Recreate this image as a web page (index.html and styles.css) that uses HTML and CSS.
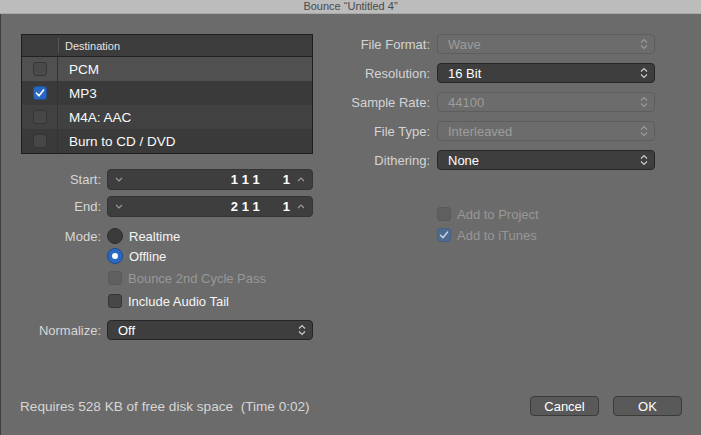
FILE: index.html
```html
<!DOCTYPE html>
<html>
<head>
<meta charset="utf-8">
<link rel="stylesheet" href="styles.css">
</head>
<body>
<div class="window">
  <div class="titlebar"><span class="ttext">Bounce “Untitled 4”</span></div>
  <div class="body">
    <div class="main">
      <div class="left">
        <div class="table">
          <div class="thead"><div class="c1"></div><div class="c2">Destination</div></div>
          <div class="trow r-light"><div class="c1"><span class="cb"></span></div><div class="c2">PCM</div></div>
          <div class="trow r-dark"><div class="c1"><span class="cb on"><svg viewBox="0 0 14 14" width="14" height="14"><path d="M3.5 7.2 L6 9.8 L10.6 4" fill="none" stroke="#fff" stroke-width="1.6" stroke-linecap="round" stroke-linejoin="round"/></svg></span></div><div class="c2">MP3</div></div>
          <div class="trow r-mid"><div class="c1"><span class="cb"></span></div><div class="c2">M4A: AAC</div></div>
          <div class="trow r-dark"><div class="c1"><span class="cb"></span></div><div class="c2">Burn to CD / DVD</div></div>
        </div>

        <div class="frow start">
          <span class="lbl">Start:</span>
          <div class="stepper">
            <svg class="chev" viewBox="0 0 8 5" width="8" height="5"><path d="M1 1 L4 4 L7 1" fill="none" stroke="#9c9c9c" stroke-width="1.1"/></svg>
            <span class="fill"></span>
            <span class="num">1 1 1</span>
            <span class="num num2">1</span>
            <svg class="chev up" viewBox="0 0 8 5" width="8" height="5"><path d="M1 4 L4 1 L7 4" fill="none" stroke="#9c9c9c" stroke-width="1.1"/></svg>
          </div>
        </div>
        <div class="frow end">
          <span class="lbl">End:</span>
          <div class="stepper">
            <svg class="chev" viewBox="0 0 8 5" width="8" height="5"><path d="M1 1 L4 4 L7 1" fill="none" stroke="#9c9c9c" stroke-width="1.1"/></svg>
            <span class="fill"></span>
            <span class="num">2 1 1</span>
            <span class="num num2">1</span>
            <svg class="chev up" viewBox="0 0 8 5" width="8" height="5"><path d="M1 4 L4 1 L7 4" fill="none" stroke="#9c9c9c" stroke-width="1.1"/></svg>
          </div>
        </div>
        <div class="frow mode1">
          <span class="lbl">Mode:</span>
          <span class="radio"></span><span class="opt">Realtime</span>
        </div>
        <div class="frow mode2">
          <span class="lbl"></span>
          <span class="radio sel"><span class="dot"></span></span><span class="opt">Offline</span>
        </div>
        <div class="frow cbrow1">
          <span class="lbl"></span>
          <span class="cb dis"></span><span class="opt dim">Bounce 2nd Cycle Pass</span>
        </div>
        <div class="frow cbrow2">
          <span class="lbl"></span>
          <span class="cb"></span><span class="opt">Include Audio Tail</span>
        </div>
        <div class="frow norm">
          <span class="lbl">Normalize:</span>
          <div class="popup on wide">
            <span class="ptext">Off</span>
            <svg class="updown" viewBox="0 0 8 12" width="8" height="12"><path d="M1 4.5 L4 1.5 L7 4.5 M1 7.5 L4 10.5 L7 7.5" fill="none" stroke="#cfcfcf" stroke-width="1.1"/></svg>
          </div>
        </div>
      </div>

      <div class="right">
        <div class="prow">
          <span class="rlbl">File Format:</span>
          <div class="popup off"><span class="ptext">Wave</span><svg class="updown" viewBox="0 0 8 12" width="8" height="12"><path d="M1 4.5 L4 1.5 L7 4.5 M1 7.5 L4 10.5 L7 7.5" fill="none" stroke="#9a9a9a" stroke-width="1.1"/></svg></div>
        </div>
        <div class="prow">
          <span class="rlbl">Resolution:</span>
          <div class="popup on"><span class="ptext">16 Bit</span><svg class="updown" viewBox="0 0 8 12" width="8" height="12"><path d="M1 4.5 L4 1.5 L7 4.5 M1 7.5 L4 10.5 L7 7.5" fill="none" stroke="#cfcfcf" stroke-width="1.1"/></svg></div>
        </div>
        <div class="prow">
          <span class="rlbl">Sample Rate:</span>
          <div class="popup off"><span class="ptext">44100</span><svg class="updown" viewBox="0 0 8 12" width="8" height="12"><path d="M1 4.5 L4 1.5 L7 4.5 M1 7.5 L4 10.5 L7 7.5" fill="none" stroke="#9a9a9a" stroke-width="1.1"/></svg></div>
        </div>
        <div class="prow">
          <span class="rlbl">File Type:</span>
          <div class="popup off"><span class="ptext">Interleaved</span><svg class="updown" viewBox="0 0 8 12" width="8" height="12"><path d="M1 4.5 L4 1.5 L7 4.5 M1 7.5 L4 10.5 L7 7.5" fill="none" stroke="#9a9a9a" stroke-width="1.1"/></svg></div>
        </div>
        <div class="prow">
          <span class="rlbl">Dithering:</span>
          <div class="popup on"><span class="ptext">None</span><svg class="updown" viewBox="0 0 8 12" width="8" height="12"><path d="M1 4.5 L4 1.5 L7 4.5 M1 7.5 L4 10.5 L7 7.5" fill="none" stroke="#cfcfcf" stroke-width="1.1"/></svg></div>
        </div>
        <div class="rcb first">
          <span class="rlbl"></span>
          <span class="cb dis"></span><span class="opt dim">Add to Project</span>
        </div>
        <div class="rcb second">
          <span class="rlbl"></span>
          <span class="cb dison"><svg viewBox="0 0 14 14" width="14" height="14"><path d="M3.5 7.2 L6 9.8 L10.6 4" fill="none" stroke="#c9d2de" stroke-width="1.5" stroke-linecap="round" stroke-linejoin="round"/></svg></span><span class="opt dim">Add to iTunes</span>
        </div>
      </div>
    </div>

    <div class="footer">
      <span class="info">Requires 528 KB of free disk space&nbsp; (Time 0:02)</span>
      <span class="fill"></span>
      <button class="btn">Cancel</button>
      <button class="btn ok">OK</button>
    </div>
  </div>
</div>
</body>
</html>
```

FILE: styles.css
```css
html, body {
  margin: 0;
  padding: 0;
}
body {
  width: 701px;
  height: 435px;
  overflow: hidden;
  background: #6b6b6b;
  font-family: "Liberation Sans", Arial, sans-serif;
  font-size: 13px;
  color: #f2f2f2;
}
.window {
  display: flex;
  flex-direction: column;
  height: 435px;
}
.titlebar {
  height: 13px;
  line-height: 13px;
  background: #bcbcbc;
  border-bottom: 1px solid #a9a9a9;
  color: #4a4a4a;
  font-size: 11px;
  text-align: center;
}
.ttext {
  display: inline-block;
}
.body {
  flex: 1;
  display: flex;
  flex-direction: column;
  border-left: 1px solid #3e3e3e;
}
.main {
  display: flex;
  padding: 20px 0 0 20px;
}
.left {
  width: 292px;
}

/* destination table */
.table {
  border: 1px solid #1e1e1e;
  background: #3a3a3a;
}
.thead {
  display: flex;
  height: 21px;
  background: #3c3c3c;
  border-bottom: 1px solid #222;
  font-size: 11px;
  color: #e4e4e4;
}
.thead .c1 {
  width: 36px;
  border-right: 1px solid #565656;
  margin: 3px 0;
}
.thead .c2 {
  display: flex;
  align-items: center;
  padding-left: 6px;
}
.trow {
  display: flex;
  height: 24px;
}
.r-light { background: #505050; }
.r-dark { background: #3a3a3a; }
.r-mid { background: #414141; }
.trow .c1 {
  width: 36px;
  border-right: 1px solid #333;
  display: flex;
  align-items: center;
  padding-left: 11px;
  box-sizing: border-box;
}
.trow .c2 {
  display: flex;
  align-items: center;
  padding-left: 11px;
  color: #fafafa;
  font-size: 13.5px;
}

/* checkboxes */
.cb {
  display: inline-block;
  width: 14px;
  height: 14px;
  box-sizing: border-box;
  border-radius: 3px;
  background: #474747;
  border: 1px solid #353535;
  flex: none;
}
.r-light .cb {
  background: #4a4a4a;
  border-color: #373737;
}
.cb svg { display: block; margin: -1px; }
.cb.on {
  background: #2a67c0;
  border-color: #1f4f95;
}
.cb.dis {
  background: #5f5f5f;
  border-color: #5a5a5a;
}
.cb.dison {
  background: #4d6a90;
  border-color: #4a5f7c;
}

/* form rows */
.frow {
  display: flex;
  align-items: center;
}
.lbl {
  width: 80px;
  flex: none;
  text-align: right;
  margin-right: 6px;
  color: #d6d6d6;
}
.start { margin-top: 15px; height: 21px; }
.end { margin-top: 6px; height: 21px; }
.mode1 { margin-top: 11px; height: 16px; }
.mode2 { margin-top: 4px; height: 16px; }
.cbrow1 { margin-top: 7px; height: 14px; }
.cbrow2 { margin-top: 9px; height: 14px; }
.norm { margin-top: 12px; height: 20px; }
.cbrow1 .cb, .cbrow2 .cb { margin-left: 1px; }

.stepper {
  flex: 1;
  height: 21px;
  box-sizing: border-box;
  display: flex;
  align-items: center;
  background: #3e3e3e;
  border: 1px solid #343434;
  border-radius: 4px;
  padding: 0 7px;
}
.chev { display: block; flex: none; }
.chev.up { margin-left: 7px; }
.fill { flex: 1; }
.num {
  color: #fff;
  font-weight: bold;
  font-size: 13px;
  white-space: pre;
}
.num2 { margin-left: 23px; }

.radio {
  width: 16px;
  height: 16px;
  box-sizing: border-box;
  border-radius: 50%;
  background: #3b3b3b;
  border: 1px solid #2c2c2c;
  display: flex;
  align-items: center;
  justify-content: center;
  flex: none;
}
.radio.sel {
  background: #2c69c2;
  border-color: #1c4a8e;
}
.dot {
  width: 6px;
  height: 6px;
  border-radius: 50%;
  background: #fff;
}
.opt {
  margin-left: 6px;
  color: #f5f5f5;
}
.opt.dim { color: #989898; }

/* popups */
.popup {
  width: 218px;
  height: 20px;
  box-sizing: border-box;
  border-radius: 4px;
  display: flex;
  align-items: center;
  padding: 0 6px 0 10px;
}
.popup.wide { flex: 1; width: auto; padding-left: 10px; height: 20px; }
.popup.on {
  background: #3e3e3e;
  border: 1px solid #262626;
  color: #fff;
}
.popup.off {
  background: #6c6c6c;
  border: 1px solid #5d5d5d;
  color: #9c9c9c;
}
.ptext { flex: 1; }
.updown { display: block; flex: none; }

/* right column */
.right {
  margin-left: 27px;
}
.prow {
  display: flex;
  align-items: center;
  height: 20px;
  margin-bottom: 9px;
}
.rlbl {
  width: 90px;
  flex: none;
  text-align: right;
  margin-right: 7px;
  color: #d4d4d4;
}
.rcb {
  display: flex;
  align-items: center;
  height: 14px;
}
.rcb.first { margin-top: 37px; }
.rcb.second { margin-top: 7px; }

/* footer */
.footer {
  margin-top: auto;
  display: flex;
  align-items: center;
  height: 20px;
  padding: 0 19px 19px 19px;
}
.info {
  font-size: 13.6px;
  color: #d6d6d6;
}
.btn {
  width: 69px;
  height: 20px;
  box-sizing: border-box;
  background: #595959;
  border: 1px solid #3b3b3b;
  border-radius: 4px;
  color: #fff;
  font-family: "Liberation Sans", Arial, sans-serif;
  font-size: 13px;
  padding: 0;
  margin-left: 14px;
}
```
